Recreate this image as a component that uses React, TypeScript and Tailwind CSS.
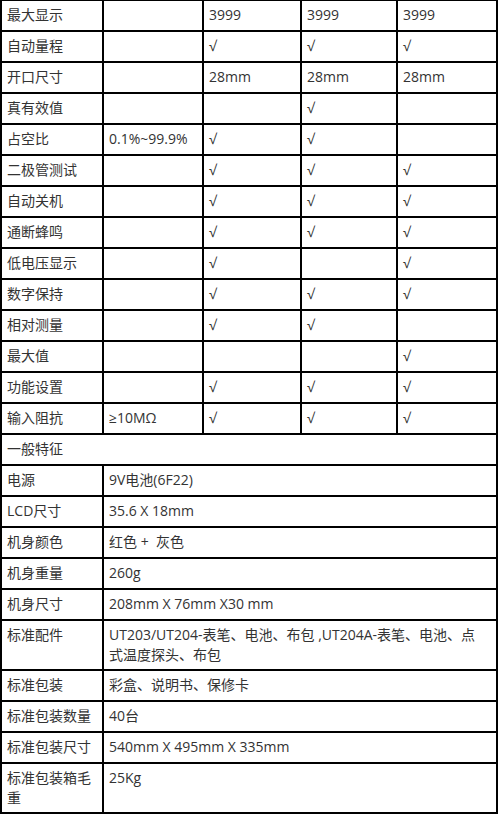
import React from "react";

// ==========================================
// Data
// ==========================================
type SpecRow = [string, string, string, string, string];

const featureRows: SpecRow[] = [
  ["最大显示", "", "3999", "3999", "3999"],
  ["自动量程", "", "√", "√", "√"],
  ["开口尺寸", "", "28mm", "28mm", "28mm"],
  ["真有效值", "", "", "√", ""],
  ["占空比", "0.1%~99.9%", "√", "√", ""],
  ["二极管测试", "", "√", "√", "√"],
  ["自动关机", "", "√", "√", "√"],
  ["通断蜂鸣", "", "√", "√", "√"],
  ["低电压显示", "", "√", "", "√"],
  ["数字保持", "", "√", "√", "√"],
  ["相对测量", "", "√", "√", ""],
  ["最大值", "", "", "", "√"],
  ["功能设置", "", "√", "√", "√"],
  ["输入阻抗", "≥10MΩ", "√", "√", "√"],
];

const generalRows: { label: string; value: React.ReactNode; tall?: boolean }[] = [
  { label: "电源", value: "9V电池(6F22)" },
  { label: "LCD尺寸", value: "35.6 X 18mm" },
  { label: "机身颜色", value: "红色 +  灰色" },
  { label: "机身重量", value: "260g" },
  { label: "机身尺寸", value: "208mm X 76mm X30 mm" },
  {
    label: "标准配件",
    value: (
      <>
        UT203/UT204-表笔、电池、布包 ,UT204A-表笔、电池、点
        <br />
        式温度探头、布包
      </>
    ),
    tall: true,
  },
  { label: "标准包装", value: "彩盒、说明书、保修卡" },
  { label: "标准包装数量", value: "40台" },
  { label: "标准包装尺寸", value: "540mm X 495mm X 335mm" },
  { label: "标准包装箱毛重", value: "25Kg", tall: true },
];

const cell = "border-2 border-black px-[5px] pt-[4px] align-top leading-[20px] whitespace-pre-wrap";

// ==========================================
// Main Component
// ==========================================
export default function App() {
  return (
    <div
      className="w-[500px] h-[814px] overflow-hidden bg-white text-[14px] text-[#333333]"
      style={{ fontFamily: '"Open Sans", "Liberation Sans", "Noto Sans CJK SC", sans-serif' }}
    >
      <table className="-mt-[1px] w-[498px] table-fixed border-collapse">
        <colgroup>
          <col className="w-[102px]" />
          <col className="w-[100px]" />
          <col className="w-[98px]" />
          <col className="w-[96px]" />
          <col className="w-[100px]" />
        </colgroup>
        <tbody>
          {/* Feature comparison rows */}
          {featureRows.map((row) => (
            <tr key={row[0]} className="h-[31px]">
              {row.map((v, i) => (
                <td key={i} className={cell}>
                  {v}
                </td>
              ))}
            </tr>
          ))}

          {/* Section header */}
          <tr className="h-[31px]">
            <td colSpan={5} className={cell}>
              一般特征
            </td>
          </tr>

          {/* General spec rows */}
          {generalRows.map((r) => (
            <tr key={r.label} className={r.tall ? "h-[50px]" : "h-[31px]"}>
              <td className={cell}>{r.label}</td>
              <td colSpan={4} className={cell}>
                {r.value}
              </td>
            </tr>
          ))}
        </tbody>
      </table>
    </div>
  );
}
